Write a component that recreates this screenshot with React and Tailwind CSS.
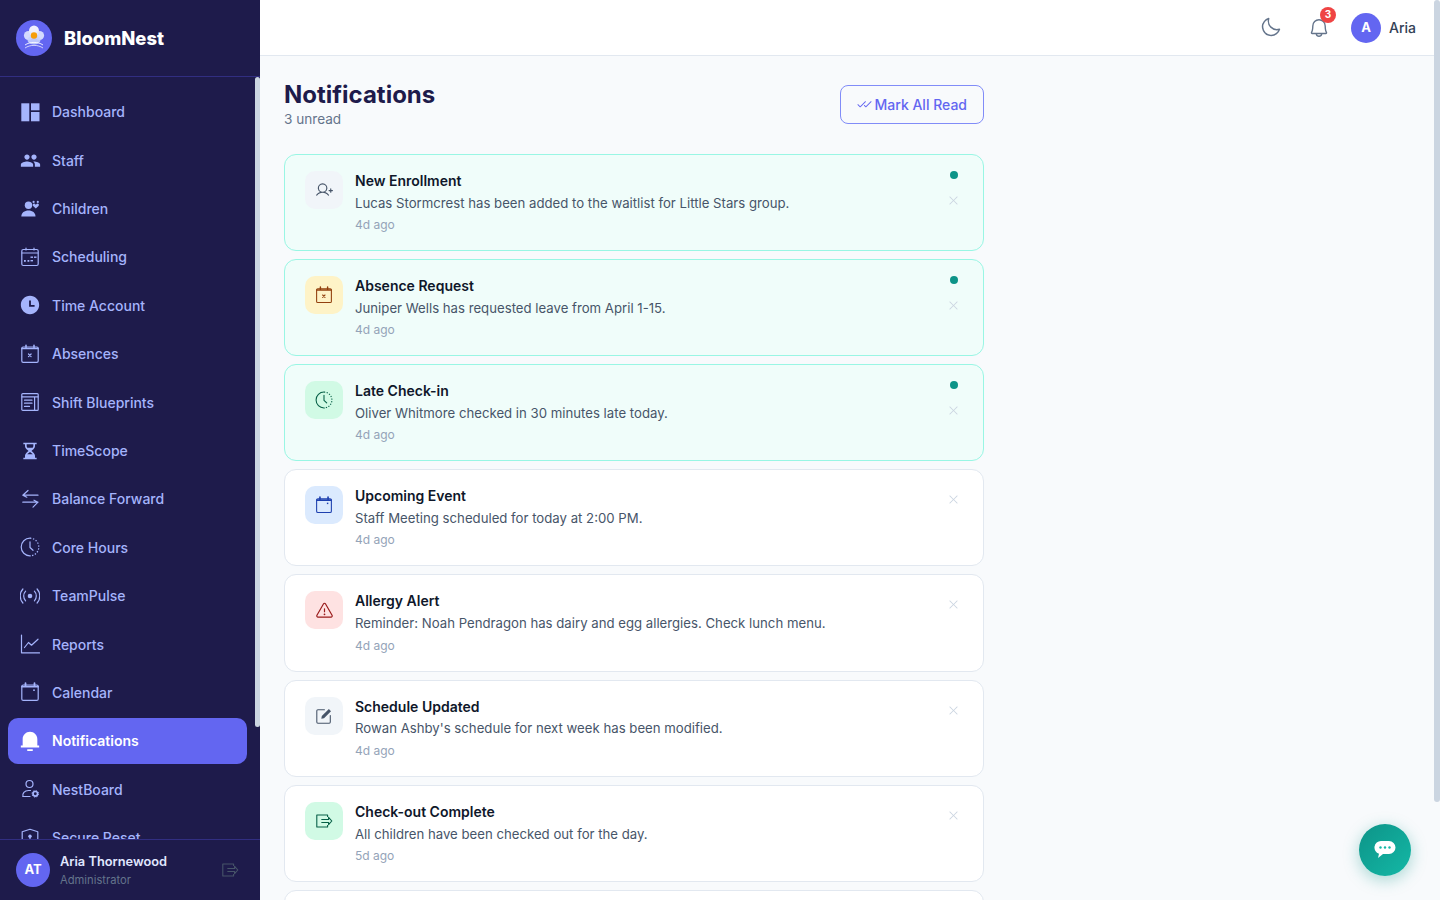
import { RiTimeFill, RiNotification3Fill, RiHourglassFill } from 'react-icons/ri'
import { MdPeople } from 'react-icons/md'
import { PiMoon, PiBell, PiUserPlus, PiChecks, PiX, PiWarning } from 'react-icons/pi'

const Svg = ({ size = 20, children, className = '' }) => (
  <svg width={size} height={size} viewBox="0 0 20 20" fill="none" stroke="currentColor" strokeWidth="1.2" strokeLinecap="round" strokeLinejoin="round" className={`shrink-0 ${className}`}>
    {children}
  </svg>
)

const DashboardIcon = ({ size }) => (
  <Svg size={size}>
    <g fill="currentColor" stroke="none">
      <rect x="1.3" y="1.3" width="8" height="18" />
      <rect x="11" y="1.3" width="8.5" height="7" />
      <rect x="11" y="10" width="8.5" height="9.3" />
    </g>
  </Svg>
)

const ChildrenIcon = ({ size }) => (
  <Svg size={size}>
    <g fill="currentColor" stroke="none">
      <circle cx="8.5" cy="6.2" r="3.7" />
      <path d="M1.3 17.5c0-3.8 3.2-6 7.2-6s7 2.2 7 6z" />
      <path d="M15.8 9.5l-2.7-2.6c-1.4-1.5.9-3.4 2.2-1.7l.5.6.5-.6c1.3-1.7 3.6.2 2.2 1.7z" />
      <circle cx="13.6" cy="2.9" r="1.1" />
      <circle cx="17.8" cy="2.9" r="1.1" />
    </g>
  </Svg>
)

const ScheduleIcon = ({ size }) => (
  <Svg size={size}>
    <rect x="1.8" y="2.5" width="16.4" height="16" rx="1.5" />
    <path d="M6 1v2M14 1v2M2 6h16" />
    <g fill="currentColor" stroke="none">
      <rect x="10.5" y="9.5" width="2.5" height="1.4" />
      <rect x="14" y="9.5" width="2.5" height="1.4" />
      <rect x="4" y="13" width="1.8" height="1.8" />
      <rect x="7.5" y="13" width="1.8" height="1.8" />
      <rect x="10.5" y="13" width="2.5" height="1.4" />
    </g>
  </Svg>
)

const AbsenceIcon = ({ size, className }) => (
  <Svg size={size} className={className}>
    <rect x="1.8" y="3" width="16.4" height="15.4" rx="1.3" />
    <path d="M6 1.2v2M14 1.2v2M2 4.5h16" strokeWidth="1.6" />
    <path d="M8.5 10l2.6 2.6M11.1 10l-2.6 2.6" />
  </Svg>
)

const BlueprintIcon = ({ size }) => (
  <Svg size={size}>
    <rect x="1.8" y="1.6" width="16.4" height="16.8" rx="1" />
    <path d="M2 4.8h16M14.6 5v13M4.5 8.2h7.5M4.5 11.2h7.5M4.5 14.4h5" />
  </Svg>
)

const BalanceIcon = ({ size }) => (
  <Svg size={size}>
    <path d="M8 1.5L2.8 6.2H18M2.8 6.2l4 2" />
    <path d="M2.8 13.2H18l-5 5M18 13.2l-4-2" />
  </Svg>
)

const CoreHoursIcon = ({ size }) => (
  <Svg size={size}>
    <path d="M10 1.2a8.800 8.800 0 0 0 0 17.600" />
    <path d="M10 1.2a8.800 8.800 0 0 1 0 17.600" strokeDasharray="1.400 1.600" strokeLinecap="butt" />
    <path d="M10 4.800v5.700l3 2.800" />
  </Svg>
)

const PulseIcon = ({ size }) => (
  <Svg size={size}>
    <circle cx="10" cy="10" r="2.300" fill="currentColor" stroke="none" />
    <path d="M5.600 5.200a7 7 0 0 0 0 9.600M14.400 5.200a7 7 0 0 1 0 9.600" />
    <path d="M2.900 3a10.500 10.500 0 0 0 0 14M17.100 3a10.500 10.500 0 0 1 0 14" />
  </Svg>
)

const ReportsIcon = ({ size }) => (
  <Svg size={size}>
    <path d="M1.500 1v17.800H19.500" />
    <path d="M4.500 13.500l4-5 3 2.700 6.500-6" />
  </Svg>
)

const CalendarIcon = ({ size, className }) => (
  <Svg size={size} className={className}>
    <rect x="1.8" y="3" width="16.4" height="15.4" rx="1.5" />
    <path d="M5.500 1.200v2M14.500 1.200v2M2 4.600h16" strokeWidth="1.800" />
    <rect x="13.200" y="7.400" width="1.600" height="1.600" fill="currentColor" stroke="none" />
  </Svg>
)

const NestBoardIcon = ({ size }) => (
  <Svg size={size}>
    <circle cx="9.500" cy="5" r="3.500" />
    <path d="M3 17.500c-1-3 1.500-6 5.500-6h2" />
    <path d="M3 17.500h7" />
    <circle cx="15.300" cy="14.800" r="2.300" strokeWidth="1.700" />
    <circle cx="15.300" cy="14.800" r="3.300" strokeWidth="1" strokeDasharray="1.200 1.400" strokeLinecap="butt" />
  </Svg>
)

const ShieldIcon = ({ size }) => (
  <Svg size={size}>
    <path d="M10 1.300l7.800 2.500v6.700c0 4-3.500 6.800-7.800 8.200-4.300-1.400-7.800-4.200-7.800-8.200V3.800z" />
    <circle cx="10" cy="8.300" r="1.700" fill="currentColor" stroke="none" />
    <path d="M10 9v4" />
  </Svg>
)

const LogoutIcon = ({ size, className }) => (
  <Svg size={size} className={className}>
    <path d="M14 5.500V3.300H2v13.400h12v-2.200" strokeLinecap="butt" />
    <path d="M7.500 8.400h7.600V6l3.600 4-3.600 4v-2.400H7.500" />
  </Svg>
)

const EditIcon = ({ size }) => (
  <Svg size={size}>
    <path d="M10.500 3H3.200C2.500 3 2 3.500 2 4.200v12.600c0 .7.500 1.200 1.200 1.200h12.600c.7 0 1.200-.5 1.200-1.200V9.500" />
    <path d="M7 13l.6-3L15.400 2.200l2.400 2.400L10 12.400z" fill="currentColor" stroke="none" />
  </Svg>
)

const navItems = [
  { label: 'Dashboard', icon: <DashboardIcon /> },
  { label: 'Staff', icon: <MdPeople size={21} className="shrink-0" /> },
  { label: 'Children', icon: <ChildrenIcon /> },
  { label: 'Scheduling', icon: <ScheduleIcon /> },
  { label: 'Time Account', icon: <RiTimeFill size={22} className="shrink-0" /> },
  { label: 'Absences', icon: <AbsenceIcon /> },
  { label: 'Shift Blueprints', icon: <BlueprintIcon /> },
  { label: 'TimeScope', icon: <RiHourglassFill size={20} className="shrink-0" /> },
  { label: 'Balance Forward', icon: <BalanceIcon /> },
  { label: 'Core Hours', icon: <CoreHoursIcon /> },
  { label: 'TeamPulse', icon: <PulseIcon /> },
  { label: 'Reports', icon: <ReportsIcon /> },
  { label: 'Calendar', icon: <CalendarIcon /> },
  { label: 'Notifications', icon: <RiNotification3Fill size={22} className="shrink-0" />, active: true },
  { label: 'NestBoard', icon: <NestBoardIcon /> },
  { label: 'Secure Reset', icon: <ShieldIcon /> },
]

const notifications = [
  { title: 'New Enrollment', text: 'Lucas Stormcrest has been added to the waitlist for Little Stars group.', time: '4d ago', icon: <PiUserPlus size={18} />, tone: 'bg-[#f1f5f9] text-[#475569]', unread: true },
  { title: 'Absence Request', text: 'Juniper Wells has requested leave from April 1-15.', time: '4d ago', icon: <AbsenceIcon size={18} />, tone: 'bg-[#fef3c7] text-[#92400e]', unread: true },
  { title: 'Late Check-in', text: 'Oliver Whitmore checked in 30 minutes late today.', time: '4d ago', icon: <CoreHoursIcon size={18} />, tone: 'bg-[#d1fae5] text-[#065f46]', unread: true },
  { title: 'Upcoming Event', text: 'Staff Meeting scheduled for today at 2:00 PM.', time: '4d ago', icon: <CalendarIcon size={18} />, tone: 'bg-[#dbeafe] text-[#1e40af]' },
  { title: 'Allergy Alert', text: 'Reminder: Noah Pendragon has dairy and egg allergies. Check lunch menu.', time: '4d ago', icon: <PiWarning size={19} />, tone: 'bg-[#fee2e2] text-[#991b1b]' },
  { title: 'Schedule Updated', text: "Rowan Ashby's schedule for next week has been modified.", time: '4d ago', icon: <EditIcon size={18} />, tone: 'bg-[#f1f5f9] text-[#475569]' },
  { title: 'Check-out Complete', text: 'All children have been checked out for the day.', time: '5d ago', icon: <LogoutIcon size={18} />, tone: 'bg-[#d1fae5] text-[#065f46]' },
  { title: 'Staff Meeting', text: 'Monthly staff meeting notes are now available.', time: '5d ago', icon: <CalendarIcon size={18} />, tone: 'bg-[#dbeafe] text-[#1e40af]' },
]

function Logo() {
  return (
    <svg width="36" height="36" viewBox="0 0 36 36" className="shrink-0">
      <circle cx="18" cy="18" r="18" fill="#6366f1" />
      <ellipse cx="18" cy="11" rx="5" ry="5.500" fill="#fff" fillOpacity="0.9" />
      <circle cx="12.500" cy="15.500" r="4.600" fill="#e0e7ff" fillOpacity="0.9" />
      <circle cx="23.500" cy="15.500" r="4.600" fill="#e0e7ff" fillOpacity="0.9" />
      <ellipse cx="18" cy="20" rx="6.500" ry="4.500" fill="#c7d2fe" fillOpacity="0.9" />
      <circle cx="18" cy="15.500" r="3.200" fill="#f59e0b" />
      <path d="M9 25c5-3.500 13-3.500 18 0" fill="none" stroke="#fff" strokeOpacity="0.85" strokeWidth="1" />
      <path d="M9 28c5-3.500 13-3.500 18 0" fill="none" stroke="#fff" strokeOpacity="0.7" strokeWidth="1" />
    </svg>
  )
}

function NavItem({ item }) {
  return (
    <div className={`flex items-center gap-3 h-[46.4px] mb-[2px] px-3 rounded-[10px] text-[14px] ${item.active ? 'bg-[#6366f1] text-white font-semibold' : 'text-[#a5b4fc] font-medium'}`}>
      <span className="flex items-center justify-center w-5 shrink-0">{item.icon}</span>
      <span>{item.label}</span>
    </div>
  )
}

function NotificationCard({ item }) {
  return (
    <div className={`flex gap-3 px-5 py-4 rounded-xl border ${item.unread ? 'bg-[#f0fdfa] border-[#99f6e4]' : 'bg-white border-[#e2e8f0]'}`}>
      <div className={`flex items-center justify-center w-[38px] h-[38px] rounded-[10px] shrink-0 ${item.tone}`}>
        {item.icon}
      </div>
      <div className="flex-1 min-w-0">
        <div className="text-[14px] leading-[20.8px] font-semibold text-[#0f172a]">{item.title}</div>
        <div className="text-[13.2px] leading-[22px] text-[#475569]">{item.text}</div>
        <div className="mt-[2.4px] text-[12px] leading-[18px] text-[#94a3b8]">{item.time}</div>
      </div>
      <div className="relative w-2 shrink-0 mr-[5.500px]">
        {item.unread && <div className="w-2 h-2 rounded-full bg-[#0d9488]" />}
        <PiX size={13} className={`absolute left-[-2.500px] text-[#cbd5e1] ${item.unread ? 'top-[23px]' : 'top-[7px]'}`} />
      </div>
    </div>
  )
}

export default function App() {
  return (
    <div className="flex h-screen overflow-hidden bg-[#f8fafc] font-['Inter',sans-serif]">
      {/* sidebar */}
      <aside className="relative flex flex-col w-[260px] shrink-0 h-full bg-[#1e1b4b]">
        <div className="flex items-center gap-3 h-[77px] px-4 shrink-0 border-b border-[#312e81]">
          <Logo />
          <span className="pt-[1px] text-[18.4px] font-extrabold text-white">BloomNest</span>
        </div>
        <nav className="flex-1 min-h-0 overflow-hidden w-[255px] px-2 pt-[11.6px]">
          {navItems.map(item => <NavItem key={item.label} item={item} />)}
        </nav>
        <div className="flex items-center gap-[10px] h-[61px] px-4 shrink-0 border-t border-[#312e81]">
          <div className="flex items-center justify-center w-[34px] h-[34px] rounded-full bg-[#6366f1] text-white text-[13px] font-bold shrink-0">AT</div>
          <div className="flex-1 min-w-0 pt-[2px]">
            <div className="text-[12.8px] leading-[19px] font-semibold text-[#e0e7ff]">Aria Thornewood</div>
            <div className="text-[11.2px] leading-[19px] text-[#64748b]">Administrator</div>
          </div>
          <LogoutIcon size={18} className="text-[#475569] mr-[5px]" />
        </div>
        {/* nav scrollbar thumb */}
        <div className="absolute left-[255px] top-[77px] w-[5px] h-[650px] rounded-[3px] bg-[#cbd5e1]" />
      </aside>

      {/* page */}
      <div className="flex-1 min-w-0 h-full overflow-y-auto">
        <header className="sticky top-0 z-10 flex items-center justify-end h-14 pr-6 bg-white border-b border-[#e2e8f0]">
          <PiMoon size={23} className="text-[#64748b] mr-[26px]" />
          <div className="relative mr-[21px]">
            <PiBell size={22} className="text-[#64748b]" />
            <span className="absolute -top-[10px] -right-[6px] flex items-center justify-center w-4 h-4 rounded-full bg-[#ef4444] text-white text-[10px] font-bold">3</span>
          </div>
          <div className="flex items-center justify-center w-[30px] h-[30px] rounded-full bg-[#6366f1] text-white text-[13px] font-bold">A</div>
          <span className="ml-2 text-[14px] font-medium text-[#334155]">Aria</span>
        </header>
        <main className="w-[748px] p-6">
          <div className="flex items-center justify-between mb-6">
            <div>
              <h1 className="text-[24px] leading-[29.3px] font-bold text-[#1e1b4b]">Notifications</h1>
              <p className="text-[13.6px] leading-[20.4px] text-[#64748b]">3 unread</p>
            </div>
            <button className="flex items-center gap-[3px] h-[39px] px-4 rounded-lg border-[1.5px] border-[#818cf8] text-[14px] font-medium text-[#6366f1]">
              <PiChecks size={15} />
              Mark All Read
            </button>
          </div>
          <div className="flex flex-col gap-2">
            {notifications.map(item => <NotificationCard key={item.title} item={item} />)}
          </div>
        </main>
      </div>

      {/* page scrollbar thumb */}
      <div className="fixed right-0 top-0 z-20 w-[6px] h-[802px] rounded-[3px] bg-[#cbd5e1]" />

      {/* chat bubble */}
      <button className="fixed right-[29px] bottom-[24px] flex items-center justify-center w-[52px] h-[52px] rounded-full bg-gradient-to-br from-[#0d9488] to-[#14b8a6] shadow-[0_4px_16px_rgba(13,148,136,0.35)]">
        <svg width="22" height="20" viewBox="0 0 22 20">
          <path d="M7 1h8a6.500 6.500 0 0 1 0 13H9l-5 4 1-4.300A6.500 6.500 0 0 1 7 1z" fill="#fff" />
          <circle cx="6.500" cy="7.500" r="1.200" fill="#14b8a6" />
          <circle cx="11" cy="7.500" r="1.200" fill="#14b8a6" />
          <circle cx="15.500" cy="7.500" r="1.200" fill="#14b8a6" />
        </svg>
      </button>
    </div>
  )
}
